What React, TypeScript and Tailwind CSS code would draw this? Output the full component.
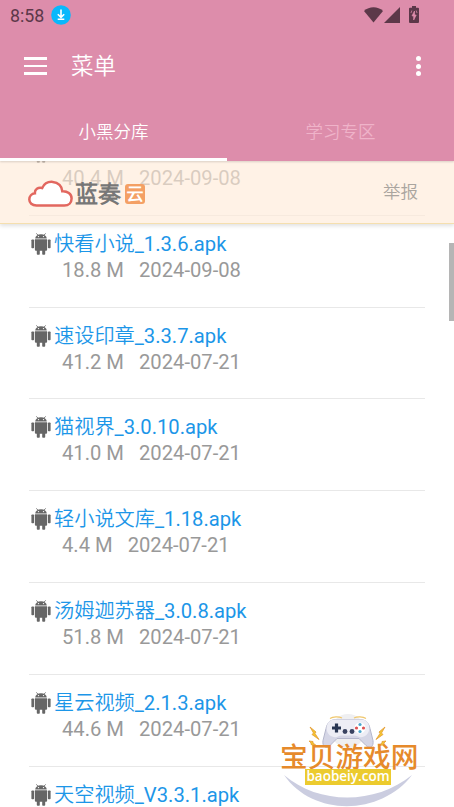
type FileItem = {
  name: string;
  size: string;
  date: string;
};

const FILES: FileItem[] = [
  { name: "", size: "40.4 M", date: "2024-09-08" },
  { name: "快看小说_1.3.6.apk", size: "18.8 M", date: "2024-09-08" },
  { name: "速设印章_3.3.7.apk", size: "41.2 M", date: "2024-07-21" },
  { name: "猫视界_3.0.10.apk", size: "41.0 M", date: "2024-07-21" },
  { name: "轻小说文库_1.18.apk", size: "4.4 M", date: "2024-07-21" },
  { name: "汤姆迦苏器_3.0.8.apk", size: "51.8 M", date: "2024-07-21" },
  { name: "星云视频_2.1.3.apk", size: "44.6 M", date: "2024-07-21" },
  { name: "天空视频_V3.3.1.apk", size: "", date: "" },
];

function AndroidIcon() {
  return (
    <svg viewBox="0 0 20 22" className="h-[22px] w-5 shrink-0" fill="#666">
      <path d="M5.2.4 7 2M14.8.4 13 2" stroke="#666" strokeWidth=".8" />
      <path d="M4.200 5.600C4.400 2.900 6.600 1.300 10 1.300s5.600 1.600 5.800 4.300z" />
      <circle cx="7.5" cy="3.6" r=".7" fill="#fff" />
      <circle cx="12.5" cy="3.6" r=".7" fill="#fff" />
      <path d="M3.900 6.200h12.200v10.600a1 1 0 0 1-1 1H4.900a1 1 0 0 1-1-1z" />
      <rect x=".4" y="6.400" width="2.700" height="8.800" rx=".8" />
      <rect x="16.900" y="6.400" width="2.700" height="8.800" rx=".8" />
      <rect x="5.800" y="16" width="3" height="5.800" rx=".8" />
      <rect x="11.200" y="16" width="3" height="5.800" rx=".8" />
    </svg>
  );
}

function StatusBar() {
  return (
    <div className="flex h-[31px] items-center pl-[10px] pr-[35px] text-[#5c3849]">
      <span className="w-[34px] text-[17.8px] leading-[31px]">8:58</span>
      <svg viewBox="0 0 20 20" className="-mt-[1px] ml-[7px] h-5 w-5">
        <circle cx="10" cy="10" r="9.8" fill="#08b8fc" />
        <path d="M10 4.4v8M6.8 9.2l3.2 3.2 3.2-3.2M6.7 14.3h6.6" fill="none" stroke="#fff" strokeWidth="1.6" />
      </svg>
      <div className="ml-auto flex items-center" aria-hidden>
        <svg viewBox="0 0 19 16" className="-mt-[2px] h-4 w-[19px]" fill="currentColor">
          <path d="M0 4.1C5.2-.9 13.8-.9 19 4.1L9.5 15.6z" />
        </svg>
        <svg viewBox="0 0 16 16" className="-mt-[1px] ml-[1px] h-4 w-4" fill="currentColor">
          <path d="M16 0v16H0z" />
        </svg>
        <svg viewBox="0 0 10 17" className="-mt-[2px] ml-[9px] h-[17px] w-[10px]" fill="currentColor">
          <path d="M3 0h4v1.8h2a1 1 0 0 1 1 1V16a1 1 0 0 1-1 1H1a1 1 0 0 1-1-1V2.800a1 1 0 0 1 1-1h2z" />
          <path
            d="M5.500 5 3 9.900h1.700V14L7.200 9H5.500zM2 7l.8-2.500M8 7l-.8-2.500"
            fill="#dd8dab"
            stroke="#dd8dab"
            strokeWidth=".7"
          />
        </svg>
      </div>
    </div>
  );
}

function Header() {
  return (
    <header className="relative z-20 flex h-[161px] shrink-0 flex-col bg-[#dd8dab] text-white shadow-[0_1px_2px_rgba(0,0,0,0.15)]">
      <StatusBar />
      <div className="flex h-[70px] items-center pl-6 pr-[33px]">
        <button className="flex w-[23px] flex-col gap-[5px]" aria-label="menu">
          <span className="h-[2.5px] w-full bg-white" />
          <span className="h-[2.5px] w-full bg-white" />
          <span className="h-[2.5px] w-full bg-white" />
        </button>
        <h1 className="ml-6 text-[22.5px] leading-[30px] font-normal">菜单</h1>
        <button className="ml-auto flex flex-col gap-[2.5px]" aria-label="more">
          <span className="h-[5px] w-[5px] rounded-full bg-white" />
          <span className="h-[5px] w-[5px] rounded-full bg-white" />
          <span className="h-[5px] w-[5px] rounded-full bg-white" />
        </button>
      </div>
      <nav className="grid h-[60px] grid-cols-2 text-center text-[17.5px] leading-[53px]">
        <div className="h-[60px] border-b-[3px] border-white pt-[5px]">小黑分库</div>
        <div className="h-[60px] pt-[5px] text-[#efb3c9]">学习专区</div>
      </nav>
    </header>
  );
}

function Banner() {
  return (
    <div className="absolute inset-x-0 top-0 z-10 flex h-[63px] items-center border-b border-[#f5dfae] bg-[#ffead7]/63 pl-[27px] pr-9 shadow-[0_2px_4px_rgba(0,0,0,0.12)]">
      <svg viewBox="0 0 47 28" className="mt-[3px] h-7 w-[47px]">
        <path
          d="M9.500 25.500C5 25.500 2.300 22.700 2.300 19.500c0-3.300 2.400-5.800 5.600-6.200-.3-4 3.200-6.400 7.300-5.300C17.100 3.900 21.200 1.500 25.800 1.900c5.400.5 9.300 4.500 9.500 9.400 5.100-.3 9.300 2.700 9.300 7.100 0 4.100-3 7.100-7.300 7.100z"
          fill="#fff"
          stroke="#e2675f"
          strokeWidth="2.500"
        />
      </svg>
      <span className="mt-[6px] ml-[1px] text-[23px] leading-[30px] font-bold text-[#777]">蓝奏</span>
      <span className="mt-[4px] ml-[4px] flex h-5 w-5 items-center justify-center rounded-[3px] bg-[#f4a064] text-[17px] leading-5 font-bold text-white">
        云
      </span>
      <span className="ml-auto text-[17.500px] text-[#aaa59f]">举报</span>
    </div>
  );
}

function FileRow({ file }: { file: FileItem }) {
  return (
    <li className="h-[91.8px] shrink-0 border-b border-[#e8e8e8] pt-[14px]">
      <div className="flex h-7 items-center pl-[2px]">
        <AndroidIcon />
        <span className="ml-[3px] text-[20.2px] leading-7 whitespace-nowrap text-[#1c96e8]">{file.name}</span>
      </div>
      <div className="flex gap-[15px] pl-[33px] text-[20.2px] leading-[25px] text-[#999]">
        <span>{file.size}</span>
        <span>{file.date}</span>
      </div>
    </li>
  );
}

function Watermark() {
  return (
    <div className="absolute top-[552px] left-[279px] z-10 h-[94px] w-[142px]">
      <svg viewBox="0 0 142 94" className="absolute inset-0 h-full w-full">
        <circle cx="69" cy="18" r="17" fill="#efeff1" />
        <path d="M5 62c35 30 91 30 128 0-30 40-98 43-128 0z" fill="#cbcde0" />
        <path
          d="M57 6.500c-6 0-9 4-10 9l-3 12c-1 6 3 9 7 5l7-7h22l7 7c4 4 8 1 7-5l-3-12c-1-5-4-9-10-9z"
          fill="#d5d6e6"
          stroke="#b5b7cc"
          strokeWidth="1"
        />
        <path d="M56 6.500h26c10 0 11 14 3 17-5 2-6-1-10-1H63c-4 0-5 3-10 1-8-3-7-17 3-17z" fill="#ededf5" />
        <path d="M51 5.500c3-2 9-2 12-.5M75 5c3-1.500 9-1.500 12 .5" fill="none" stroke="#f0c76c" strokeWidth="1.200" />
        <path d="M57.500 10.500v9M53 15h9" stroke="#293653" strokeWidth="3.200" />
        <circle cx="66" cy="18.500" r="2.400" fill="#394260" />
        <circle cx="73" cy="18.500" r="2.400" fill="#394260" />
        <circle cx="81" cy="15" r="5.500" fill="#fff" />
        <circle cx="81" cy="11.500" r="1.600" fill="#4ca7ce" />
        <circle cx="81" cy="18.500" r="1.600" fill="#4ca7ce" />
        <circle cx="77.500" cy="15" r="1.600" fill="#df5252" />
        <circle cx="84.500" cy="15" r="1.600" fill="#df5252" />
        <path
          d="m31 14 6 5-1 1.500 4 6-7-5 1.500-1.500zM106 14l-6 5 1 1.500-4 6 7-5-1.500-1.500zM30 28l4 .5v1.500l4 3-6-1.500v-1.500zM107 28l-4 .5v1.500l-4 3 6-1.500v-1.500z"
          fill="#f4c52f"
          stroke="#e39a35"
          strokeWidth=".8"
        />
      </svg>
      <div className="absolute top-[22px] left-[1px] font-['Noto_Sans_CJK_SC',sans-serif] text-[27.700px] leading-[40px] font-medium whitespace-nowrap text-[#e68a2b]">
        宝贝游戏网
      </div>
      <div className="absolute top-[56px] left-[26px] h-4 w-[86px] bg-[#eccb2e] text-center font-['Open_Sans','Noto_Sans',sans-serif] text-[13.500px] leading-[15px] font-semibold text-white">
        baobeiy.com
      </div>
    </div>
  );
}

export default function App() {
  return (
    <div className="flex h-[807px] w-[454px] flex-col overflow-hidden bg-white font-[Roboto,'Noto_Sans_CJK_SC_DemiLight','Noto_Sans_CJK_SC',sans-serif]">
      <Header />
      <main className="relative min-h-0 flex-1 overflow-hidden">
        <Banner />
        <ul className="-mt-[37px] flex flex-col px-[29px]">
          {FILES.map((file, i) => (
            <FileRow key={i} file={file} />
          ))}
        </ul>
        <div className="absolute top-[82px] right-0 h-[78px] w-[5px] bg-[#b5b5b5]" />
        <Watermark />
      </main>
    </div>
  );
}
